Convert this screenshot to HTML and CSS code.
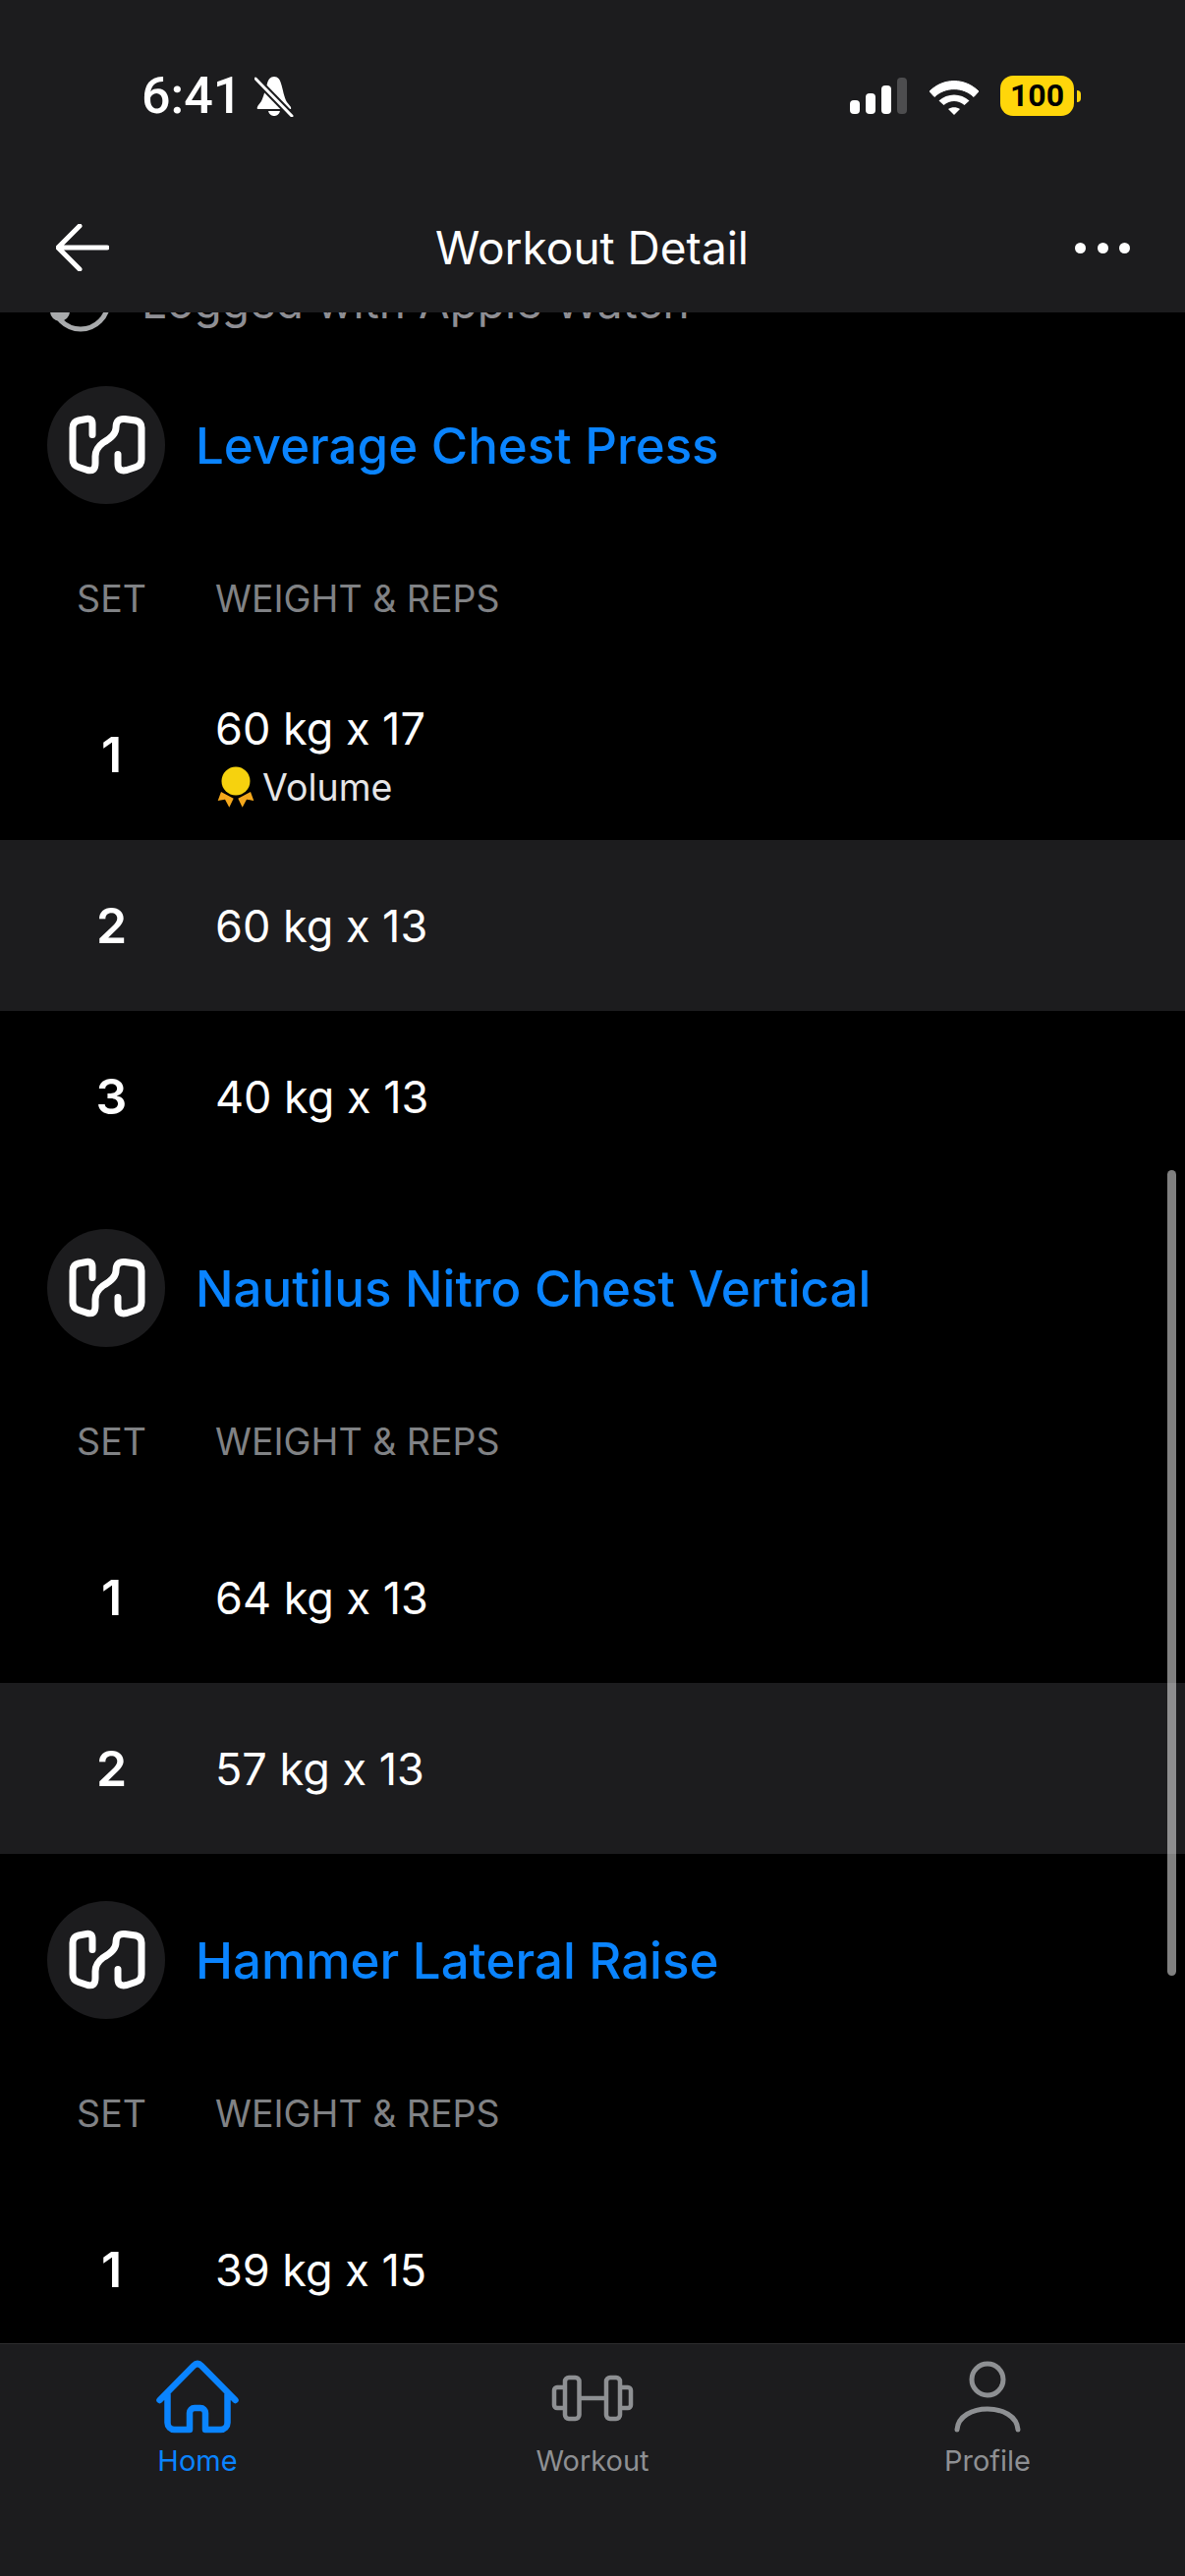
FILE: index.html
```html
<!DOCTYPE html>
<html lang="en">
<head>
  <meta charset="UTF-8" />
  <meta name="viewport" content="width=device-width, initial-scale=1.0" />
  <title>Workout Detail</title>
  <link rel="stylesheet" href="styles.css">
</head>
<body>
  <svg class="defs" width="0" height="0">
    <symbol id="machine" viewBox="-2 0.5 100 85">
      <path d="M34 32 V21 Q34 15 28 16 L20 17.500 Q14 19 14 25 V57 Q14 63 20 65 L29 68 Q37 70 37 61 V54 Q37 46 45 40 Q58 33 58 25 Q58 15 67 16 L78 17.500 Q84 19 84 25 V57 Q84 63 78 65 L69 68 Q60 70 60 62 V52" fill="none" stroke="#fff" stroke-width="7" stroke-linecap="round" stroke-linejoin="round" />
    </symbol>
  </svg>

  <div class="screen">
    <header class="topbar">
      <div class="statusbar">
        <div class="status-left">
          <span class="time">6:41</span>
          <svg class="bell" viewBox="0 0 40 42">
            <path d="M20 1 C24 1 26 4 27 8 C29 14 30 22 33 27 C36 31 38 32 37 34 H3 C2 32 4 30 7 26 C9 22 11 14 13 8 C14 4 16 1 20 1 Z" fill="#fff" />
            <path d="M14 36 H26 C25 40 22 41 20 41 C18 41 15 40 14 36 Z" fill="#fff" />
            <path d="M1 3 L38 41" stroke="#1c1c1e" stroke-width="7" />
            <path d="M1 3 L38 41" stroke="#fff" stroke-width="3" stroke-linecap="round" />
          </svg>
        </div>
        <div class="status-right">
          <div class="signal">
            <span class="bar bar-1"></span>
            <span class="bar bar-2"></span>
            <span class="bar bar-3"></span>
            <span class="bar bar-4"></span>
          </div>
          <svg class="wifi" viewBox="0 0 52 38">
            <path d="M1 14 C15 0 37 0 51 14 L46 19.500 C35 9 17 9 6 19.500 Z" fill="#fff" stroke="#fff" stroke-linejoin="round" stroke-width="1" />
            <path d="M10.500 23.500 C19 15.500 33 15.500 41.500 23.500 L36.500 28 C30 22.500 22 22.500 15.500 28 Z" fill="#fff" />
            <path d="M20 32 C23.500 29.500 28.500 29.500 32 32 L26 38 Z" fill="#fff" />
          </svg>
          <div class="battery">
            <span class="battery-level">100</span>
            <span class="battery-tip"></span>
          </div>
        </div>
      </div>
      <nav class="navbar">
        <svg class="back" viewBox="0 0 54 48">
          <path d="M52 24 H3 M24 2 L2 24 L24 46" fill="none" stroke="#fff" stroke-width="5" stroke-linecap="round" stroke-linejoin="round" />
        </svg>
        <h1 class="nav-title">Workout Detail</h1>
        <div class="more">
          <span class="dot"></span>
          <span class="dot"></span>
          <span class="dot"></span>
        </div>
      </nav>
    </header>

    <main class="content">
      <div class="logged">
        <svg class="watch" viewBox="0 0 64 64">
          <circle cx="32" cy="33" r="28" fill="none" stroke="#a9abad" stroke-width="5" />
          <circle cx="11" cy="43" r="10" fill="#a9abad" />
        </svg>
        <span class="logged-text">Logged with Apple Watch</span>
      </div>

      <section class="exercise">
        <div class="exercise-head">
          <div class="thumb"><svg class="thumb-icon"><use href="#machine" /></svg></div>
          <h2 class="exercise-name">Leverage Chest Press</h2>
        </div>
        <div class="set-head"><span class="set-col">SET</span><span>WEIGHT &amp; REPS</span></div>
        <div class="set-row">
          <span class="set-col set-num">1</span>
          <div class="set-info">
            <div class="set-value">60 kg x 17</div>
            <div class="record">
              <svg class="medal" viewBox="0 0 40 44">
                <path d="M6 26 L18.700 32.700 L14.300 41.700 L10 33.700 L2.700 35 Z" fill="#f5a81c" />
                <path d="M36 26 L23.300 32.700 L27.700 41.700 L32 33.700 L39.300 35 Z" fill="#f5a81c" />
                <circle cx="21" cy="15" r="14.500" fill="#f6d20e" />
              </svg>
              <span>Volume</span>
            </div>
          </div>
        </div>
        <div class="set-row striped">
          <span class="set-col set-num">2</span>
          <div class="set-value">60 kg x 13</div>
        </div>
        <div class="set-row">
          <span class="set-col set-num">3</span>
          <div class="set-value">40 kg x 13</div>
        </div>
      </section>

      <section class="exercise">
        <div class="exercise-head">
          <div class="thumb"><svg class="thumb-icon"><use href="#machine" /></svg></div>
          <h2 class="exercise-name">Nautilus Nitro Chest Vertical</h2>
        </div>
        <div class="set-head"><span class="set-col">SET</span><span>WEIGHT &amp; REPS</span></div>
        <div class="set-row">
          <span class="set-col set-num">1</span>
          <div class="set-value">64 kg x 13</div>
        </div>
        <div class="set-row striped">
          <span class="set-col set-num">2</span>
          <div class="set-value">57 kg x 13</div>
        </div>
      </section>

      <section class="exercise">
        <div class="exercise-head">
          <div class="thumb"><svg class="thumb-icon"><use href="#machine" /></svg></div>
          <h2 class="exercise-name">Hammer Lateral Raise</h2>
        </div>
        <div class="set-head"><span class="set-col">SET</span><span>WEIGHT &amp; REPS</span></div>
        <div class="set-row">
          <span class="set-col set-num">1</span>
          <div class="set-value">39 kg x 15</div>
        </div>
      </section>

      <div class="scrollbar"></div>
    </main>

    <footer class="tabbar">
      <div class="tab active">
        <svg class="tab-icon" viewBox="0 0 84 84">
          <path d="M3.500 43 L38 8 Q42 4 46 8 L80.500 43 M11.500 37 V66 a7 7 0 0 0 7 7 H34 V56 a5 5 0 0 1 5 -5 H45 a5 5 0 0 1 5 5 V73 H65.500 a7 7 0 0 0 7 -7 V37" fill="none" stroke="#0a84ff" stroke-width="6.500" stroke-linecap="round" stroke-linejoin="round" />
        </svg>
        <span>Home</span>
      </div>
      <div class="tab">
        <svg class="tab-icon" viewBox="0 0 84 84">
          <g fill="none" stroke="#8e9093" stroke-width="4.500" stroke-linejoin="round">
            <path d="M14 30 H6 a3 3 0 0 0 -3 3 V48 a3 3 0 0 0 3 3 H14" />
            <rect x="14" y="20" width="14.500" height="42" rx="4" />
            <path d="M28.500 41 H56" />
            <rect x="56" y="20" width="14" height="42" rx="4" />
            <path d="M70 30 H78 a3 3 0 0 1 3 3 V48 a3 3 0 0 1 -3 3 H70" />
          </g>
        </svg>
        <span>Workout</span>
      </div>
      <div class="tab">
        <svg class="tab-icon" viewBox="0 0 84 84">
          <circle cx="42" cy="22" r="16" fill="none" stroke="#8e9093" stroke-width="5" />
          <path d="M11 73 C13 45 71 45 73 73" fill="none" stroke="#8e9093" stroke-width="5" stroke-linecap="round" />
        </svg>
        <span>Profile</span>
      </div>
    </footer>
  </div>
</body>
</html>
```

FILE: styles.css
```css
* {
  box-sizing: border-box;
}
body {
  margin: 0;
  background-color: #000;
  color: #fff;
  font-family: Inter, "Noto Sans", sans-serif;
}
.defs {
  position: absolute;
}
.screen {
  width: 1206px;
  height: 2622px;
  display: flex;
  flex-direction: column;
  overflow: hidden;
}

/* top bar */
.topbar {
  height: 318px;
  flex-shrink: 0;
  padding-top: 77px;
  background-color: #1c1c1e;
  position: relative;
  z-index: 1;
}
.statusbar {
  height: 41px;
  padding: 0 106px 0 144px;
  display: flex;
  justify-content: space-between;
  align-items: center;
}
.status-left {
  display: flex;
  align-items: center;
  gap: 13px;
}
.time {
  font-family: Roboto, sans-serif;
  font-size: 52px;
  font-weight: 500;
  line-height: 41px;
}
.bell {
  width: 40px;
  height: 42px;
}
.status-right {
  display: flex;
  align-items: center;
}
.signal {
  display: flex;
  align-items: flex-end;
  gap: 6px;
  height: 37px;
}
.bar {
  width: 10px;
  border-radius: 4px;
  background-color: #fff;
}
.bar-1 { height: 14px; }
.bar-2 { height: 21px; }
.bar-3 { height: 29px; }
.bar-4 { height: 37px; background-color: #4d4d4f; }
.wifi {
  width: 52px;
  height: 38px;
  margin-left: 22px;
}
.battery {
  display: flex;
  align-items: center;
  gap: 3px;
  margin-left: 21px;
}
.battery-level {
  width: 75px;
  height: 41px;
  border-radius: 13px;
  background-color: #ffd60a;
  color: #000;
  font-family: Roboto, sans-serif;
  font-size: 32px;
  font-weight: 700;
  line-height: 41px;
  text-align: center;
}
.battery-tip {
  width: 4px;
  height: 12px;
  border-radius: 0 6px 6px 0;
  background-color: #ffd60a;
}
.navbar {
  height: 54px;
  margin-top: 107px;
  padding: 0 56px 0 57px;
  display: flex;
  justify-content: space-between;
  align-items: center;
}
.back {
  width: 54px;
  height: 48px;
}
.nav-title {
  margin: 0;
  font-size: 46px;
  font-weight: 400;
}
.more {
  width: 56px;
  display: flex;
  justify-content: space-between;
}
.dot {
  width: 11px;
  height: 11px;
  border-radius: 50%;
  background-color: #fff;
}

/* scrolling list */
.content {
  flex: 1;
  min-height: 0;
  overflow: hidden;
  position: relative;
}
.logged {
  height: 79px;
  margin-top: -52px;
  padding-left: 50px;
  display: flex;
  align-items: center;
  gap: 30px;
  color: #8e8e93;
}
.watch {
  width: 64px;
  height: 64px;
  flex-shrink: 0;
}
.logged-text {
  font-size: 46px;
  padding-top: 2px;
}
.exercise-head {
  height: 120px;
  margin-top: 48px;
  padding-left: 48px;
  display: flex;
  align-items: center;
  gap: 31px;
}
.thumb {
  width: 120px;
  height: 120px;
  border-radius: 50%;
  background-color: #1c1c1e;
  display: flex;
  justify-content: center;
  align-items: center;
}
.thumb-icon {
  width: 100px;
  height: 85px;
}
.exercise-name {
  margin: 0;
  color: #0a84ff;
  font-size: 51px;
  font-weight: 500;
}
.set-head {
  height: 80px;
  margin-top: 56px;
  margin-bottom: 32px;
  padding-left: 48px;
  display: flex;
  align-items: center;
  gap: 40px;
  color: #808285;
  font-size: 37.500px;
}
.set-col {
  width: 131px;
  flex-shrink: 0;
  text-align: center;
}
.set-row {
  height: 174px;
  padding-left: 48px;
  display: flex;
  align-items: center;
  gap: 40px;
}
.striped {
  background-color: #1c1c1e;
}
.set-num {
  font-size: 50px;
  font-weight: 600;
}
.set-value {
  padding-top: 1px;
  font-size: 45px;
  line-height: 60px;
}
.set-info {
  padding-top: 6px;
}
.record {
  display: flex;
  align-items: center;
  gap: 8px;
  color: #e5e5e7;
  font-size: 37.500px;
  line-height: 60px;
}
.medal {
  width: 40px;
  height: 44px;
}
.scrollbar {
  position: absolute;
  top: 873px;
  right: 9px;
  width: 9px;
  height: 820px;
  border-radius: 5px;
  background-color: rgba(255, 255, 255, 0.5);
}

/* bottom tabs */
.tabbar {
  height: 237px;
  flex-shrink: 0;
  padding-top: 14px;
  display: flex;
  background-color: #1c1c1e;
  border-top: 1px solid #2c2c2e;
  position: relative;
}
.tab {
  flex: 1;
  display: flex;
  flex-direction: column;
  align-items: center;
  color: #8e9093;
  font-size: 29px;
  line-height: 36px;
}
.tab.active {
  color: #0a84ff;
}
.tab-icon {
  width: 84px;
  height: 84px;
  margin-bottom: 3px;
}
```
